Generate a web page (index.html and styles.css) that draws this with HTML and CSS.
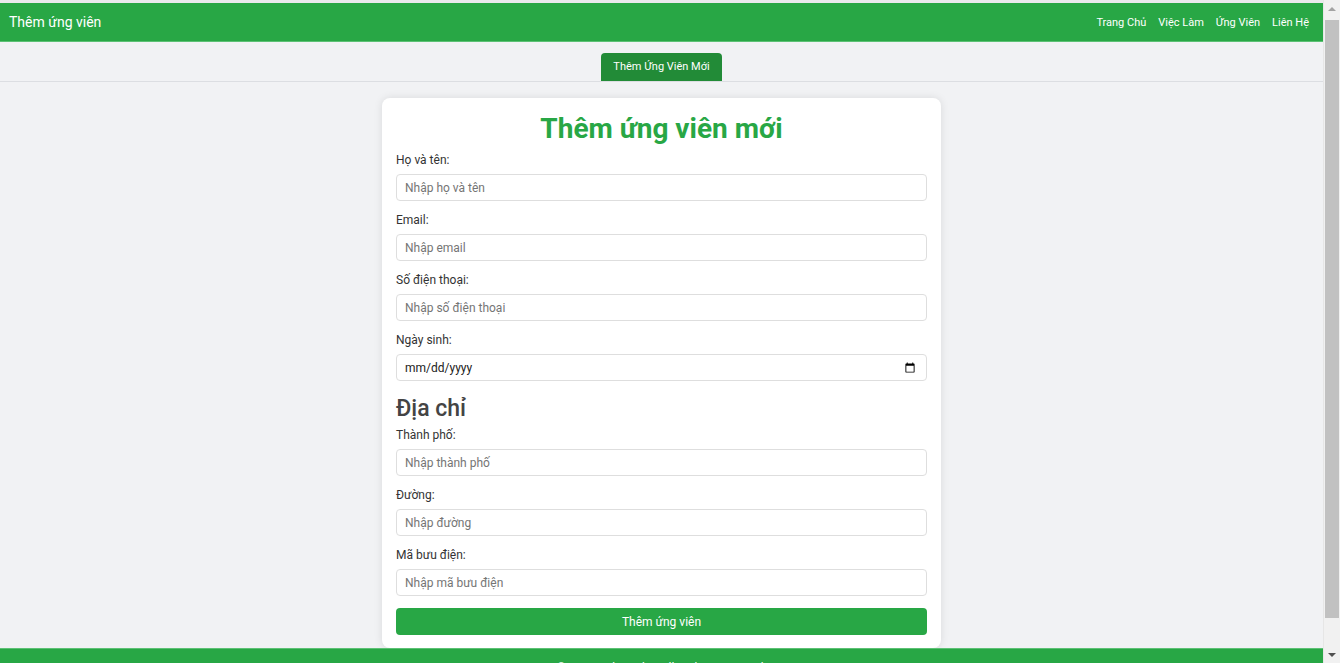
FILE: index.html
```html
<!DOCTYPE html>
<html lang="vi">
<head>
<meta charset="utf-8">
<title>Thêm ứng viên</title>
<link rel="stylesheet" href="styles.css">
</head>
<body>
<header class="navbar">
  <div class="brand">Thêm ứng viên</div>
  <nav class="nav-links">
    <a href="#">Trang Chủ</a>
    <a href="#">Việc Làm</a>
    <a href="#">Ứng Viên</a>
    <a href="#">Liên Hệ</a>
  </nav>
</header>
<div class="subnav">
  <a class="tab" href="#">Thêm Ứng Viên Mới</a>
</div>
<main class="card">
  <h1 class="title">Thêm ứng viên mới</h1>
  <form class="form">
    <label class="label" for="name">Họ và tên:</label>
    <input class="input" id="name" type="text" placeholder="Nhập họ và tên">
    <label class="label" for="email">Email:</label>
    <input class="input" id="email" type="email" placeholder="Nhập email">
    <label class="label" for="phone">Số điện thoại:</label>
    <input class="input" id="phone" type="text" placeholder="Nhập số điện thoại">
    <label class="label" for="dob">Ngày sinh:</label>
    <input class="input date" id="dob" type="date">
    <h2 class="section">Địa chỉ</h2>
    <label class="label" for="city">Thành phố:</label>
    <input class="input" id="city" type="text" placeholder="Nhập thành phố">
    <label class="label" for="street">Đường:</label>
    <input class="input" id="street" type="text" placeholder="Nhập đường">
    <label class="label" for="zip">Mã bưu điện:</label>
    <input class="input" id="zip" type="text" placeholder="Nhập mã bưu điện">
    <button class="submit" type="button">Thêm ứng viên</button>
  </form>
</main>
<footer class="footer">© 2024 Job Finder. All Rights Reserved.</footer>
<div class="scrollbar" aria-hidden="true">
  <div class="sb-arrow sb-up"></div>
  <div class="sb-track"><div class="sb-thumb"></div></div>
  <div class="sb-arrow sb-down"></div>
</div>
</body>
</html>
```

FILE: styles.css
```css
html, body {
  margin: 0;
  padding: 0;
}
body {
  background: #f1f2f4;
  font-family: Roboto, "Liberation Sans", Arial, sans-serif;
  color: #333;
  border-top: 3px solid #e9eaec;
  padding-right: 17px;
}
.navbar {
  background: #28a745;
  height: 39px;
  display: flex;
  align-items: center;
  justify-content: space-between;
  padding: 0 14px 0 9px;
  border-bottom: 1px solid #5cc174;
  box-sizing: border-box;
}
.brand {
  color: #fff;
  font-size: 14px;
}
.nav-links {
  display: flex;
  gap: 12px;
}
.nav-links a {
  color: #fff;
  text-decoration: none;
  font-size: 11px;
}
.subnav {
  height: 39px;
  display: flex;
  justify-content: center;
  align-items: flex-end;
  border-bottom: 1px solid #dcdee2;
}
.tab {
  background: #228b37;
  color: #fff;
  text-decoration: none;
  font-size: 11px;
  height: 28px;
  line-height: 28px;
  padding: 0 12px;
  border-radius: 4px 4px 0 0;
}
.card {
  width: 559px;
  box-sizing: border-box;
  margin: 16px auto 0;
  background: #fff;
  border-radius: 8px;
  box-shadow: 0 0 8px rgba(0, 0, 0, 0.1);
  padding: 14px 14px 13px;
}
.title {
  margin: 0;
  text-align: center;
  color: #28a745;
  font-size: 28px;
  font-weight: 700;
  line-height: 34px;
}
.form {
  display: flex;
  flex-direction: column;
  margin-top: 7px;
}
.label {
  font-size: 12px;
  line-height: 14px;
  color: #333;
  margin-bottom: 7px;
}
.input {
  height: 27px;
  box-sizing: border-box;
  border: 1px solid #dedede;
  border-radius: 4px;
  padding: 0 8px;
  font-family: Roboto, "Liberation Sans", Arial, sans-serif;
  font-size: 12px;
  color: #222;
  margin: 0 0 12px;
  outline: none;
}
.input::placeholder {
  color: #757575;
}
.date::-webkit-datetime-edit-fields-wrapper {
  padding: 0;
}
.date::-webkit-datetime-edit-month-field,
.date::-webkit-datetime-edit-day-field,
.date::-webkit-datetime-edit-year-field,
.date::-webkit-datetime-edit-text {
  padding: 0;
}
.section {
  margin: 0 0 6px;
  padding-top: 2px;
  font-size: 23px;
  line-height: 27px;
  font-weight: 500;
  color: #444;
}
.submit {
  height: 27px;
  border: none;
  border-radius: 4px;
  background: #28a745;
  color: #fff;
  font-family: Roboto, "Liberation Sans", Arial, sans-serif;
  font-size: 12px;
  margin: 0;
}
.footer {
  background: #28a745;
  color: #fff;
  text-align: center;
  font-size: 12px;
  padding: 12px 0 16px;
  border-top: 1px solid #5cc174;
}
.scrollbar {
  position: fixed;
  top: 0;
  right: 0;
  width: 17px;
  height: 100vh;
  background: #f1f1f1;
  display: flex;
  flex-direction: column;
  border-left: 1px solid #e6e6e6;
  box-sizing: border-box;
}
.sb-arrow {
  height: 17px;
  flex: none;
  display: flex;
  align-items: center;
  justify-content: center;
}
.sb-up::before {
  content: "";
  border-left: 4px solid transparent;
  border-right: 4px solid transparent;
  border-bottom: 4px solid #a3a3a3;
}
.sb-down::before {
  content: "";
  border-left: 4px solid transparent;
  border-right: 4px solid transparent;
  border-top: 4px solid #505050;
}
.sb-track {
  flex: 1;
  padding: 3px 1px 0 1px;
}
.sb-thumb {
  height: 598px;
  background: #c1c1c1;
}
```
